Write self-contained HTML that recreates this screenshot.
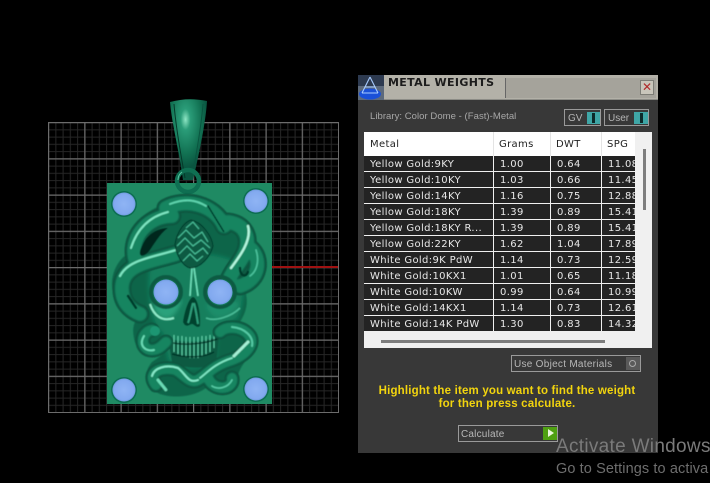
<!DOCTYPE html>
<html><head><meta charset="utf-8">
<style>
html,body{margin:0;padding:0;background:#000;width:710px;height:483px;overflow:hidden}
body{position:relative;font-family:"DejaVu Sans","Liberation Sans",sans-serif}
.a{position:absolute}
#panel{left:358px;top:75px;width:300px;height:378px;background:#383838}
.row{position:absolute;left:364px;width:271px;height:15px;color:#e8e8e8;font-size:10px;line-height:17px;letter-spacing:.35px;white-space:nowrap}
.row span{position:absolute;top:0;height:15px;background:#232323;overflow:hidden;padding-left:6px;box-sizing:border-box}
.c1{left:0;width:129px}.c2{left:130px;width:56px}.c3{left:187px;width:50px}.c4{left:238px;width:33px}
.hd{position:absolute;top:138px;font-size:10px;line-height:13px;color:#222;letter-spacing:.35px}
.box{position:absolute;border:1px solid #9a9a9a;box-sizing:border-box;color:#b5b5b5;font:10px "Liberation Sans",sans-serif;white-space:nowrap}
</style></head><body>

<svg class="a" style="left:0;top:0" width="710" height="483" viewBox="0 0 710 483">
<defs>
<pattern id="mn" x="48" y="122" width="7.25" height="7.25" patternUnits="userSpaceOnUse"><path d="M.6 0V7.25M0 .6H7.25" stroke="#262626" stroke-width="1" fill="none"/></pattern>
<pattern id="mj" x="48" y="122" width="36.25" height="36.25" patternUnits="userSpaceOnUse"><path d="M.6 0V36.25M0 .6H36.25" stroke="#6c6c6c" stroke-width="1.2" fill="none"/></pattern>
<radialGradient id="bail" cx=".42" cy=".25" r=".6"><stop offset="0" stop-color="#8fe6c4"/><stop offset=".22" stop-color="#2a9c78"/><stop offset=".7" stop-color="#127253"/><stop offset="1" stop-color="#0a5540"/></radialGradient>
<radialGradient id="eye" cx=".5" cy=".5" r=".5"><stop offset="0" stop-color="#8fb4f4"/><stop offset=".85" stop-color="#82a9ef"/><stop offset="1" stop-color="#6f9ade"/></radialGradient>
<filter id="b2" x="-20%" y="-20%" width="140%" height="140%"><feGaussianBlur stdDeviation="2"/></filter>
<filter id="b1" x="-20%" y="-20%" width="140%" height="140%"><feGaussianBlur stdDeviation=".9"/></filter>
<filter id="b0" x="-20%" y="-20%" width="140%" height="140%"><feGaussianBlur stdDeviation=".45"/></filter>
<path id="t1" d="M136 262C128 240 146 216 172 216"/>
<path id="t2" d="M176 254C150 262 124 264 122 286C121 302 130 310 140 314"/>
<path id="t3" d="M166 208C185 198 214 204 224 226"/>
<path id="t4" d="M228 222C244 224 250 236 246 250C242 262 232 270 228 282"/>
<path id="t5" d="M250 248C262 258 260 280 240 286"/>
<path id="t6" d="M152 330C140 332 140 350 152 350C158 350 162 346 166 342"/>
<path id="t7" d="M156 385C146 372 162 366 176 370C186 376 190 384 198 380C208 374 212 366 232 360C248 354 256 342 248 334C240 326 226 326 220 332"/>
<path id="t8" d="M208 378C214 392 234 390 232 378"/>
</defs>
<rect x="48" y="122" width="290" height="290" fill="url(#mn)"/>
<rect x="48" y="122" width="291" height="291" fill="url(#mj)"/>
<rect x="272" y="266" width="66" height="2" fill="#a01212"/>
<rect x="107" y="183" width="165" height="221" fill="#1f8a63"/>

<path d="M170 102Q188 97 207 101C206 120 200 150 193 180H183C179 150 172 125 170 102Z" fill="url(#bail)"/>
<path d="M174 104C176 130 181 155 185 178" stroke="#063a2a" stroke-width="1" fill="none"/>
<path d="M203 104C201 130 196 155 192 178" stroke="#0a5540" stroke-width="1" fill="none"/>
<circle cx="188" cy="181" r="11" fill="none" stroke="#0f6f52" stroke-width="4.5"/>
<path d="M178 180A10 10 0 0 1 182 172" stroke="#5cc8a4" stroke-width="1" fill="none"/>

<g filter="url(#b0)">
<path d="M126 246C132 222 146 210 166 204C186 192 212 198 226 213C246 216 256 232 254 244C264 252 268 272 254 286L246 294C248 304 246 312 240 322C256 332 260 346 250 356C240 366 236 376 238 384C232 394 216 396 206 388C192 398 172 398 160 394C146 388 142 374 152 362C158 358 160 356 164 354C150 360 136 352 134 338C132 328 134 322 138 318C124 314 112 302 112 284C112 270 120 258 128 254Z" fill="#0c6549"/>

<g filter="url(#b2)">
<path d="M150 262C170 250 220 250 240 264C246 284 244 304 238 318L218 332L216 362C200 372 180 370 168 360L162 332C150 326 146 290 150 262Z" fill="#157f5d"/>
<path d="M154 308C160 320 172 326 182 300L160 296Z" fill="#2aa27c"/>
<path d="M206 305C212 322 226 322 240 304L224 296Z" fill="#1d8e6a"/>
</g>

<g fill="none" stroke-linecap="round" stroke-linejoin="round">
<g stroke="#0a5640" stroke-width="19"><use href="#t1"/><use href="#t2"/><use href="#t3"/><use href="#t4"/><use href="#t5"/></g>
<g stroke="#148560" stroke-width="14" filter="url(#b1)"><use href="#t1"/><use href="#t2"/><use href="#t3"/><use href="#t4"/><use href="#t5"/></g>
</g>
<path d="M142 246C148 232 160 228 168 228C162 232 158 238 150 250C144 258 136 258 142 246Z" fill="#02261b"/>
<g fill="none" stroke-linecap="round">
<path d="M131 248C138 226 152 216 168 212" stroke="#7ee6c2" stroke-width="2"/>
<path d="M176 250C150 258 128 260 120 276" stroke="#7ee6c2" stroke-width="2.2"/>
<path d="M170 204C186 198 196 200 206 206" stroke="#5fd4ae" stroke-width="2"/>
<path d="M248 226C252 240 240 256 231 268" stroke="#b4f6de" stroke-width="2.4"/>
<path d="M256 250C260 262 256 272 250 276" stroke="#4bc29c" stroke-width="1.6"/>
<path d="M240 268C240 276 246 278 248 272" stroke="#053a2a" stroke-width="2.4"/>
<path d="M208 206L224 232" stroke="#053a2a" stroke-width="1.6" stroke-dasharray="1.2 1.4"/>
<path d="M128 296L136 308" stroke="#053a2a" stroke-width="2.5" stroke-dasharray="1 1.2"/>
</g>

<g fill="none">
<circle cx="166" cy="292" r="15" stroke="#0a5a42" stroke-width="4"/>
<circle cx="220" cy="292" r="15" stroke="#0a5a42" stroke-width="4"/>
<path d="M192 268L190 296M194 268L198 296" stroke="#6ee0ba" stroke-width="1.6"/>
<path d="M150 304C154 316 162 322 174 318" stroke="#8feccb" stroke-width="2"/>
<path d="M206 318C216 322 232 316 240 308" stroke="#48bb96" stroke-width="1.6"/>
</g>
<path d="M183 322C185 308 190 297 193 297C197 297 201 312 200 326C197 329 194 324 192 324C190 324 186 329 183 322Z" fill="#06422f"/>
<path d="M193 303C191 310 190 318 188 323M194 303C196 310 197 318 198 324" stroke="#2f9f7b" stroke-width="2" fill="none"/>
<path d="M168 338C185 344 205 342 219 336L216 364C200 370 182 368 172 362Z" fill="#0a5a42"/>
<g fill="none">
<path d="M174 335V352M178 336V354M182 336V356M186 337V356M190 337V358M194 337V358M198 337V358M202 336V356M206 336V354M210 335V352M214 334V348" stroke="#5ccfa8" stroke-width="1.1"/>
<path d="M168 342C185 346 205 344 220 338" stroke="#042e21" stroke-width="1.3"/>
<path d="M172 354C186 358 204 358 214 352" stroke="#042e21" stroke-width="1.3"/>
</g>

<path d="M191 220C202 222 212 236 213 246C210 258 200 268 190 268C182 266 176 254 175 244C177 232 184 222 191 220Z" fill="#0a5a42" stroke="#053a2a" stroke-width="1"/>
<g fill="none" stroke="#4cc39c" stroke-width="1.1">
<path d="M178 238L186 230L194 238L202 232L208 242M177 246L185 238L193 246L201 240L210 248M179 254L187 246L195 254L203 248L208 254M183 261L190 254L197 261L203 256M186 228L193 222L199 229"/>
</g>

<g fill="none" stroke-linecap="round" stroke-linejoin="round">
<g stroke="#0a5640" stroke-width="15"><use href="#t6"/><use href="#t7"/><use href="#t8"/></g>
<g stroke="#148560" stroke-width="10.5" filter="url(#b1)"><use href="#t6"/><use href="#t7"/><use href="#t8"/></g>
</g>
<g fill="none" stroke-linecap="round">
<path d="M144 336C138 346 146 352 154 350" stroke="#6adcb6" stroke-width="2"/>
<circle cx="155" cy="331" r="5" fill="#1f9672" stroke="none"/>
<path d="M152 376C154 368 166 364 178 368C186 374 188 384 198 380" stroke="#86eaca" stroke-width="2"/>
<path d="M200 378C208 372 214 364 232 358" stroke="#7fe6c4" stroke-width="1.8"/>
<path d="M232 327C244 328 254 336 252 346" stroke="#56cba6" stroke-width="2"/>
<path d="M234 356L248 342" stroke="#a6f0d6" stroke-width="3" stroke-dasharray="1 1.4"/>
<path d="M158 380L166 390" stroke="#6adcb6" stroke-width="3" stroke-dasharray="1 1.3"/>
<path d="M212 386C218 390 228 388 232 380" stroke="#56cba6" stroke-width="1.6"/>
</g>
</g>

<circle cx="124" cy="204" r="13" fill="#0d6e52"/><circle cx="124" cy="204" r="11.5" fill="url(#eye)"/>
<circle cx="256" cy="201" r="13" fill="#0d6e52"/><circle cx="256" cy="201" r="11.5" fill="url(#eye)"/>
<circle cx="124" cy="390" r="13" fill="#0d6e52"/><circle cx="124" cy="390" r="11.5" fill="url(#eye)"/>
<circle cx="256" cy="389" r="13" fill="#0d6e52"/><circle cx="256" cy="389" r="11.5" fill="url(#eye)"/>
<circle cx="166" cy="292" r="12.5" fill="url(#eye)"/>
<circle cx="220" cy="292" r="12.5" fill="url(#eye)"/>
</svg>

<div class="a" id="panel"></div>
<div class="a" style="left:358px;top:75px;width:300px;height:25px;background:#b3b1a8;border-bottom:1px solid #8c8c86;box-sizing:border-box"></div>
<div class="a" style="left:505px;top:78px;width:150px;height:20px;background:#a5a39b;border-left:1px solid #666"></div>
<svg class="a" style="left:358px;top:75px" width="26" height="25" viewBox="0 0 26 25">
<rect width="26" height="25" fill="#5d6a7c"/>
<rect width="26" height="11" fill="#2d3a50"/>
<ellipse cx="12" cy="19" rx="11" ry="5.5" fill="#1a50d8"/>
<path d="M12 2L4 18M12 2L20 18M4 18H20M7 12H17" stroke="#a8ccff" stroke-width="1.1" fill="none"/>
</svg>
<div class="a" style="left:388px;top:75px;font:bold 11px/15px 'DejaVu Sans',sans-serif;color:#1c1c1c;letter-spacing:.35px;white-space:nowrap">METAL WEIGHTS</div>
<div class="a" style="left:640px;top:80px;width:14px;height:15px;background:#c9c6bb;border:1px solid #7d7d76;box-sizing:border-box;color:#b02a2a;font:12px/13px 'Liberation Sans',sans-serif;text-align:center">✕</div>

<div class="a" style="left:370px;top:111px;font:9.5px/12px 'Liberation Sans',sans-serif;color:#a8a8a8;white-space:nowrap;letter-spacing:.05px">Library: Color Dome - (Fast)-Metal</div>
<div class="box" style="left:564px;top:109px;width:37px;height:17px;line-height:18px;padding-left:3px">GV<i class="a" style="left:22px;top:2px;width:13px;height:12px;background:#3fa6a6"></i><i class="a" style="left:27px;top:3px;width:3px;height:10px;background:#0c2a2a"></i></div>
<div class="box" style="left:604px;top:109px;width:45px;height:17px;line-height:18px;padding-left:3px">User<i class="a" style="left:29px;top:2px;width:14px;height:12px;background:#3fa6a6"></i><i class="a" style="left:35px;top:3px;width:3px;height:10px;background:#0c2a2a"></i></div>

<div class="a" style="left:364px;top:132px;width:288px;height:216px;background:#f0f0f0"></div>
<div class="a" style="left:364px;top:132px;width:271px;height:24px;background:#fff"></div>
<div class="a" style="left:493px;top:132px;width:1px;height:24px;background:#e4e4e4"></div>
<div class="a" style="left:550px;top:132px;width:1px;height:24px;background:#e4e4e4"></div>
<div class="a" style="left:601px;top:132px;width:1px;height:24px;background:#e4e4e4"></div>
<div class="hd" style="left:370px">Metal</div>
<div class="hd" style="left:499px">Grams</div>
<div class="hd" style="left:556px">DWT</div>
<div class="hd" style="left:607px">SPG</div>

<div class="row" style="top:156px"><span class="c1">Yellow Gold:9KY</span><span class="c2">1.00</span><span class="c3">0.64</span><span class="c4">11.08</span></div>
<div class="row" style="top:172px"><span class="c1">Yellow Gold:10KY</span><span class="c2">1.03</span><span class="c3">0.66</span><span class="c4">11.45</span></div>
<div class="row" style="top:188px"><span class="c1">Yellow Gold:14KY</span><span class="c2">1.16</span><span class="c3">0.75</span><span class="c4">12.88</span></div>
<div class="row" style="top:204px"><span class="c1">Yellow Gold:18KY</span><span class="c2">1.39</span><span class="c3">0.89</span><span class="c4">15.41</span></div>
<div class="row" style="top:220px"><span class="c1">Yellow Gold:18KY R...</span><span class="c2">1.39</span><span class="c3">0.89</span><span class="c4">15.41</span></div>
<div class="row" style="top:236px"><span class="c1">Yellow Gold:22KY</span><span class="c2">1.62</span><span class="c3">1.04</span><span class="c4">17.89</span></div>
<div class="row" style="top:252px"><span class="c1">White Gold:9K PdW</span><span class="c2">1.14</span><span class="c3">0.73</span><span class="c4">12.59</span></div>
<div class="row" style="top:268px"><span class="c1">White Gold:10KX1</span><span class="c2">1.01</span><span class="c3">0.65</span><span class="c4">11.18</span></div>
<div class="row" style="top:284px"><span class="c1">White Gold:10KW</span><span class="c2">0.99</span><span class="c3">0.64</span><span class="c4">10.99</span></div>
<div class="row" style="top:300px"><span class="c1">White Gold:14KX1</span><span class="c2">1.14</span><span class="c3">0.73</span><span class="c4">12.61</span></div>
<div class="row" style="top:316px"><span class="c1">White Gold:14K PdW</span><span class="c2">1.30</span><span class="c3">0.83</span><span class="c4">14.32</span></div>

<div class="a" style="left:643px;top:149px;width:3px;height:61px;background:#7d7d7d"></div>
<div class="a" style="left:381px;top:340px;width:224px;height:3px;background:#7d7d7d"></div>

<div class="box" style="left:511px;top:355px;width:130px;height:17px;line-height:17px;padding-left:2px;letter-spacing:.28px;color:#b8b8b8">Use Object Materials<i class="a" style="left:114px;top:1px;width:14px;height:13px;background:#5a5a5a"></i><i class="a" style="left:117px;top:4px;width:7px;height:7px;border:1px solid #aaa;border-radius:50%;box-sizing:border-box"></i></div>

<div class="a" style="left:358px;top:385px;width:298px;text-align:center;font:bold 11.5px/13px 'Liberation Sans',sans-serif;color:#f2d40e;letter-spacing:.18px">Highlight the item you want to find the weight<br>for then press calculate.</div>

<div class="box" style="left:458px;top:425px;width:100px;height:17px;line-height:17px;padding-left:2px;letter-spacing:.2px;color:#b8b8b8">Calculate<i class="a" style="left:84px;top:1px;width:14px;height:13px;background:#4fa012"></i><i class="a" style="left:89px;top:3px;width:0;height:0;border-left:6px solid #eaf6da;border-top:4.5px solid transparent;border-bottom:4.5px solid transparent"></i></div>

<div class="a" style="left:556px;top:436px;font:19px/22px 'Liberation Sans',sans-serif;color:#7a7a7a;letter-spacing:.3px;white-space:nowrap">Activate Windows</div>
<div class="a" style="left:556px;top:460px;font:14.5px/18px 'Liberation Sans',sans-serif;color:#6e6e6e;letter-spacing:.1px;white-space:nowrap">Go to Settings to activa</div>
</body></html>
